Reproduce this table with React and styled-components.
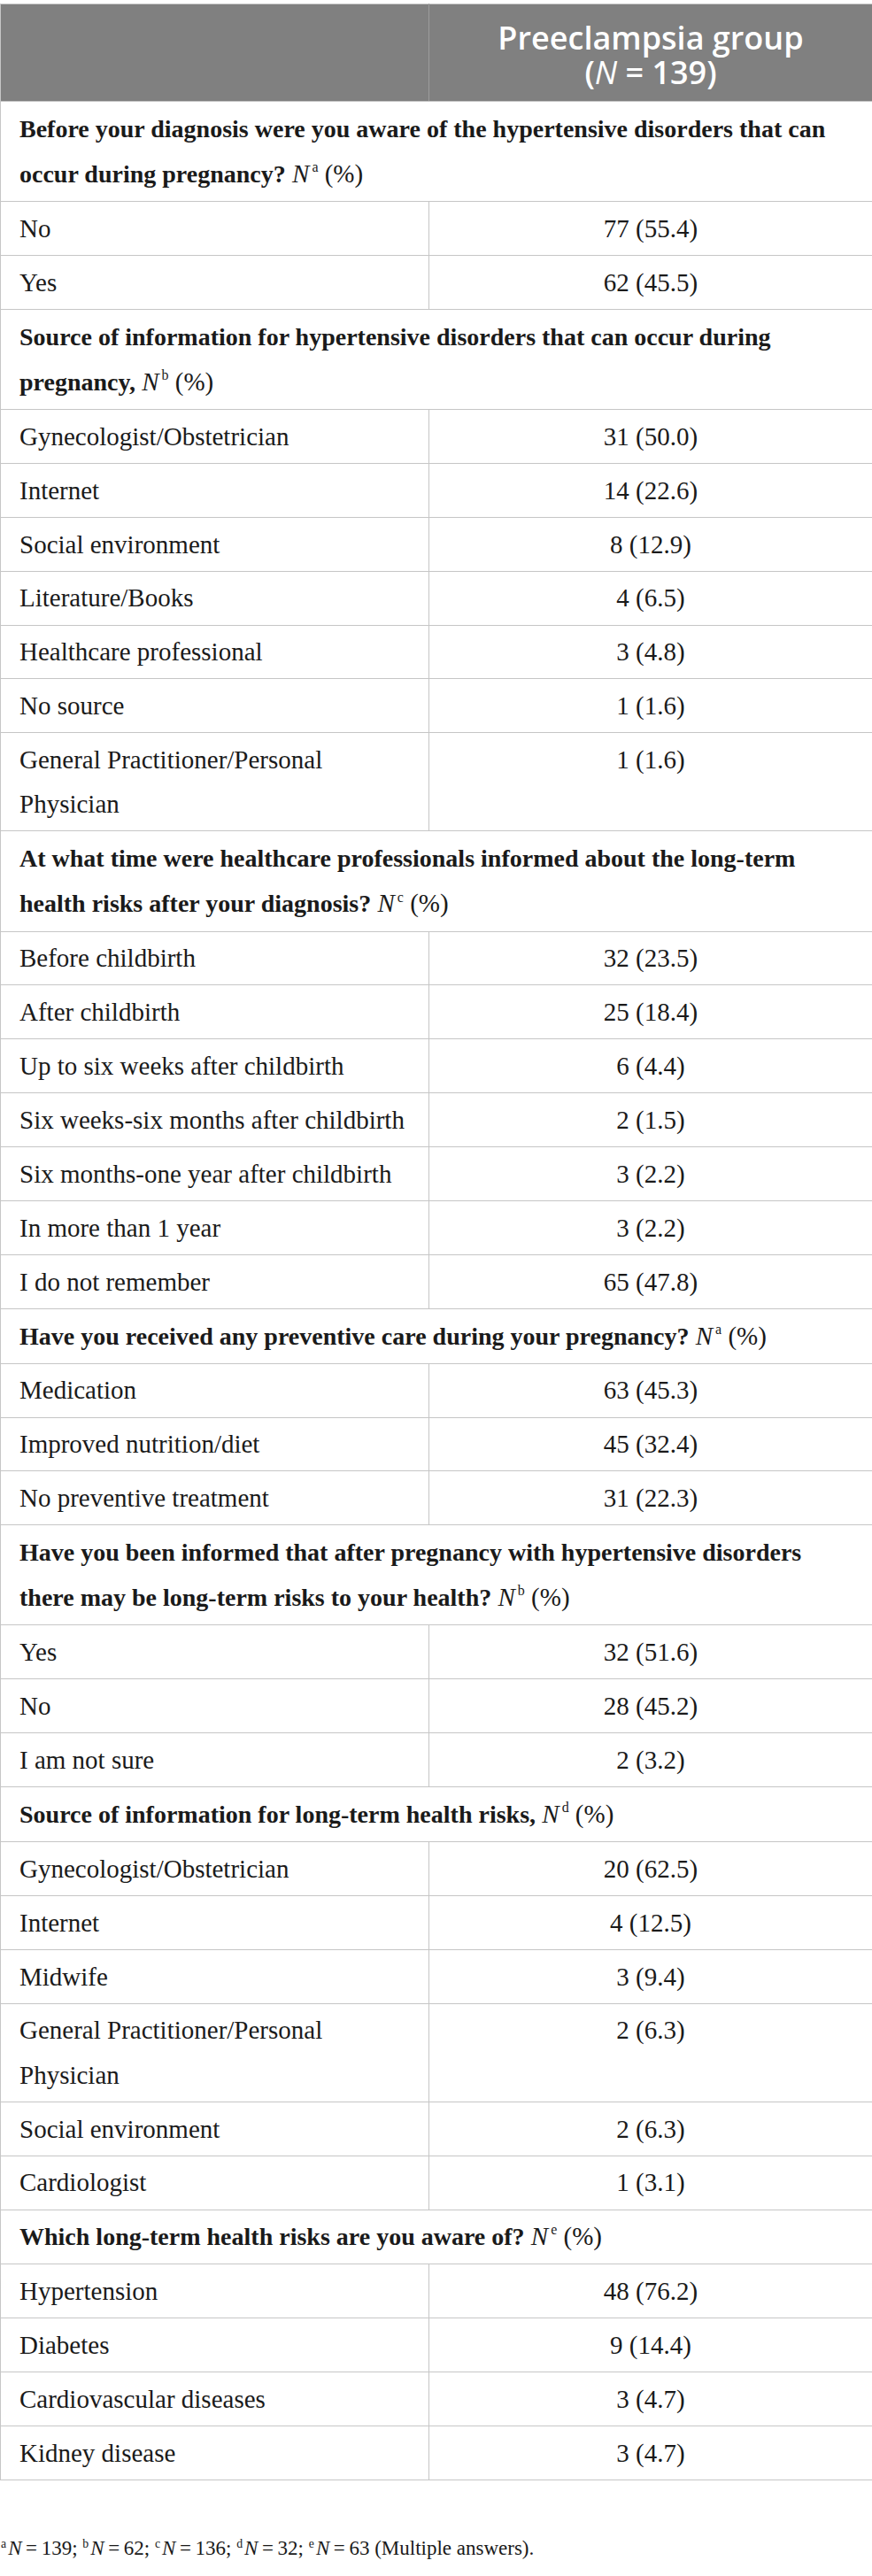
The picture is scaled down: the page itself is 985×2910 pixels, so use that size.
import React from 'react';
import styled, { createGlobalStyle } from 'styled-components';

const GlobalStyle = createGlobalStyle`
  html, body {
    margin: 0;
    padding: 0;
    background: #ffffff;
  }
  body {
    font-family: "Liberation Serif", "Times New Roman", serif;
    color: #1a1a1a;
  }
`;

const sections = [
  {
    title: 'Before your diagnosis were you aware of the hypertensive disorders that can occur during pregnancy?',
    note: 'a',
    rows: [
      ['No', '77 (55.4)'],
      ['Yes', '62 (45.5)'],
    ],
  },
  {
    title: 'Source of information for hypertensive disorders that can occur during pregnancy,',
    note: 'b',
    rows: [
      ['Gynecologist/Obstetrician', '31 (50.0)'],
      ['Internet', '14 (22.6)'],
      ['Social environment', '8 (12.9)'],
      ['Literature/Books', '4 (6.5)'],
      ['Healthcare professional', '3 (4.8)'],
      ['No source', '1 (1.6)'],
      ['General Practitioner/Personal Physician', '1 (1.6)'],
    ],
  },
  {
    title: 'At what time were healthcare professionals informed about the long-term health risks after your diagnosis?',
    note: 'c',
    rows: [
      ['Before childbirth', '32 (23.5)'],
      ['After childbirth', '25 (18.4)'],
      ['Up to six weeks after childbirth', '6 (4.4)'],
      ['Six weeks-six months after childbirth', '2 (1.5)'],
      ['Six months-one year after childbirth', '3 (2.2)'],
      ['In more than 1 year', '3 (2.2)'],
      ['I do not remember', '65 (47.8)'],
    ],
  },
  {
    title: 'Have you received any preventive care during your pregnancy?',
    note: 'a',
    rows: [
      ['Medication', '63 (45.3)'],
      ['Improved nutrition/diet', '45 (32.4)'],
      ['No preventive treatment', '31 (22.3)'],
    ],
  },
  {
    title: 'Have you been informed that after pregnancy with hypertensive disorders there may be long-term risks to your health?',
    note: 'b',
    rows: [
      ['Yes', '32 (51.6)'],
      ['No', '28 (45.2)'],
      ['I am not sure', '2 (3.2)'],
    ],
  },
  {
    title: 'Source of information for long-term health risks,',
    note: 'd',
    rows: [
      ['Gynecologist/Obstetrician', '20 (62.5)'],
      ['Internet', '4 (12.5)'],
      ['Midwife', '3 (9.4)'],
      ['General Practitioner/Personal Physician', '2 (6.3)'],
      ['Social environment', '2 (6.3)'],
      ['Cardiologist', '1 (3.1)'],
    ],
  },
  {
    title: 'Which long-term health risks are you aware of?',
    note: 'e',
    rows: [
      ['Hypertension', '48 (76.2)'],
      ['Diabetes', '9 (14.4)'],
      ['Cardiovascular diseases', '3 (4.7)'],
      ['Kidney disease', '3 (4.7)'],
    ],
  },
];

const footnotes = [
  ['a', '139'],
  ['b', '62'],
  ['c', '136'],
  ['d', '32'],
  ['e', '63'],
];

const App = () => (
  <Page>
    <GlobalStyle />
    <Table>
      <colgroup>
        <col style={{ width: 484 }} />
        <col style={{ width: 501 }} />
      </colgroup>
      <thead>
        <tr>
          <HeadCell />
          <HeadCell>
            Preeclampsia group
            <br />
            (<i>N</i> = 139)
          </HeadCell>
        </tr>
      </thead>
      <tbody>
        {sections.map((s, i) => (
          <React.Fragment key={i}>
            <tr>
              <SectionCell colSpan={2}>
                <strong>{s.title}</strong> <Italic>N</Italic>
                <Sup>{s.note}</Sup> (%)
              </SectionCell>
            </tr>
            {s.rows.map(([label, value], j) => (
              <tr key={j}>
                <LabelCell>{label}</LabelCell>
                <ValueCell>{value}</ValueCell>
              </tr>
            ))}
          </React.Fragment>
        ))}
      </tbody>
    </Table>
    <Footnote>
      {footnotes.map(([k, n], i) => (
        <React.Fragment key={k}>
          <NoteSup>{k}</NoteSup>
          <Italic>N</Italic>
          {'\u2009=\u2009'}
          {n}
          {i < footnotes.length - 1 ? '; ' : ' (Multiple answers).'}
        </React.Fragment>
      ))}
    </Footnote>
  </Page>
);

const Page = styled.div`
  width: 985px;
  padding-top: 4px;
  padding-bottom: 10px;
`;

const Table = styled.table`
  width: 985px;
  border-collapse: collapse;
  table-layout: fixed;
  border: 1px solid #c6c6c6;
`;

const HeadCell = styled.th`
  background: #808080;
  color: #ffffff;
  font-family: "Open Sans", "Noto Sans", sans-serif;
  font-weight: 600;
  font-size: 36px;
  line-height: 39px;
  text-align: center;
  padding: 18px 0 13px;
  border: 1px solid #9c9c9c;
  border-top-color: #c6c6c6;
  border-bottom-color: #c6c6c6;

  &:first-child {
    border-left-color: #c6c6c6;
  }
  &:last-child {
    border-right-color: #c6c6c6;
  }

  i {
    font-style: italic;
    font-weight: 400;
  }
`;

const Cell = styled.td`
  border: 1px solid #c6c6c6;
  font-size: 29px;
  line-height: 50.2px;
  padding: 4.85px 10px 4.85px 21px;
  vertical-align: top;
  color: #1a1a1a;
`;

const SectionCell = styled(Cell)`
  padding-right: 30px;

  strong {
    font-weight: 700;
    font-size: 28px;
  }
`;

const LabelCell = styled(Cell)`
  text-align: left;
`;

const ValueCell = styled(Cell)`
  text-align: center;
  padding-left: 0;
  padding-right: 0;
`;

const Italic = styled.i`
  font-style: italic;
`;

const Sup = styled.sup`
  font-size: 0.55em;
  line-height: 0;
  vertical-align: 0.75em;
  margin-left: 3px;
`;

const NoteSup = styled.sup`
  font-size: 0.6em;
  line-height: 0;
  vertical-align: 0.6em;
  margin-right: 2px;
`;

const Footnote = styled.p`
  margin: 62px 0 0 1px;
  font-size: 23px;
  line-height: 30px;
  color: #1a1a1a;
`;

export default App;
